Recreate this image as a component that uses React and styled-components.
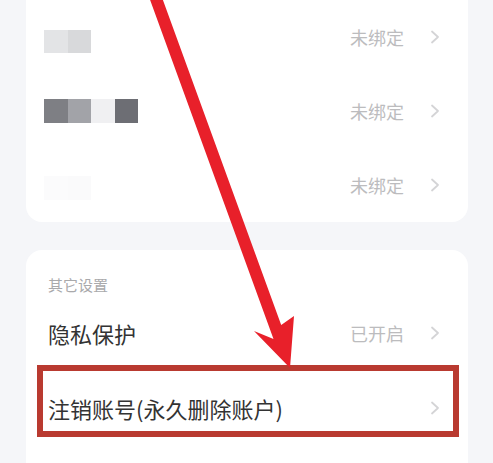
import React from "react";
import styled, { createGlobalStyle } from "styled-components";

const GlobalStyle = createGlobalStyle`
  html, body {
    margin: 0;
    padding: 0;
    background: #f5f6f9;
    font-family: "Noto Sans CJK SC", "Noto Sans", sans-serif;
  }
`;

const Page = styled.div`
  position: relative;
  width: 493px;
  height: 463px;
  overflow: hidden;
  display: flex;
  flex-direction: column;
  gap: 28px;
  padding: 0 25px 0 26px;
  box-sizing: border-box;
`;

const Card = styled.div`
  background: #ffffff;
  border-radius: ${(p) => (p.$top ? "16px 16px 0 0" : "0 0 16px 16px")};
  padding-top: ${(p) => (p.$top ? "24px" : "0")};
  flex: ${(p) => (p.$top ? "1 0 auto" : "0 0 auto")};
`;

const SectionLabel = styled.div`
  padding-left: 22px;
  height: 21px;
  line-height: 21px;
  font-size: 15px;
  color: #a9a9ab;
`;

const Row = styled.div`
  position: relative;
  height: ${(p) => p.$h || 74}px;
  display: flex;
  align-items: center;
  padding: 0 28px 0 ${(p) => p.$pl || 22}px;
`;

const Title = styled.span`
  flex: 1;
  font-size: 22px;
  color: #333333;
`;

const Blur = styled.div`
  flex: 1;
  display: flex;
  margin-top: ${(p) => p.$shift || 0}px;
`;

const Tile = styled.div`
  width: 23.5px;
  height: 23.5px;
  background: ${(p) => p.$c};
  filter: blur(0.4px);
`;

const Value = styled.span`
  font-size: 18px;
  color: #bcbcbe;
  margin-right: 26px;
`;

const Chevron = styled.svg`
  width: 10px;
  height: 14px;
  flex-shrink: 0;
`;

const Highlight = styled.div`
  position: absolute;
  left: 11px;
  right: 9px;
  top: -5px;
  bottom: 8px;
  border: 6px solid #b93a30;
  pointer-events: none;
`;

const Arrow = styled.svg`
  position: absolute;
  left: 0;
  top: 0;
  width: 493px;
  height: 463px;
  pointer-events: none;
`;

const Arrowhead = () => (
  <Chevron viewBox="0 0 10 14">
    <polyline points="2,1.5 8,7 2,12.5" fill="none" stroke="#d4d4d6" strokeWidth="1.8" strokeLinecap="round" strokeLinejoin="round" />
  </Chevron>
);

const bound = [
  { tiles: ["#e3e4e6", "#d8d9db"], shift: 9 },
  { tiles: ["#7e7f84", "#a2a3a8", "#f0f0f2", "#6d6e74"], shift: 0 },
  { tiles: ["#fbfbfc", "#fafafb"], shift: 6 },
];

export default function App() {
  return (
    <>
      <GlobalStyle />
      <Page>
        <Card>
          {bound.map((b, i) => (
            <Row key={i} $pl={18}>
              <Blur $shift={b.shift}>
                {b.tiles.map((c, j) => (
                  <Tile key={j} $c={c} />
                ))}
              </Blur>
              <Value>未绑定</Value>
              <Arrowhead />
            </Row>
          ))}
        </Card>
        <Card $top>
          <SectionLabel>其它设置</SectionLabel>
          <Row $h={75}>
            <Title>隐私保护</Title>
            <Value>已开启</Value>
            <Arrowhead />
          </Row>
          <Row $h={75}>
            <Title>注销账号(永久删除账户)</Title>
            <Arrowhead />
            <Highlight />
          </Row>
        </Card>
        <Arrow viewBox="0 0 493 463">
          <polygon
            points="148.3,-5 273.5,339 254,331 290,368 294,316 281.2,325 161.1,-5"
            fill="#e8202a"
          />
        </Arrow>
      </Page>
    </>
  );
}
